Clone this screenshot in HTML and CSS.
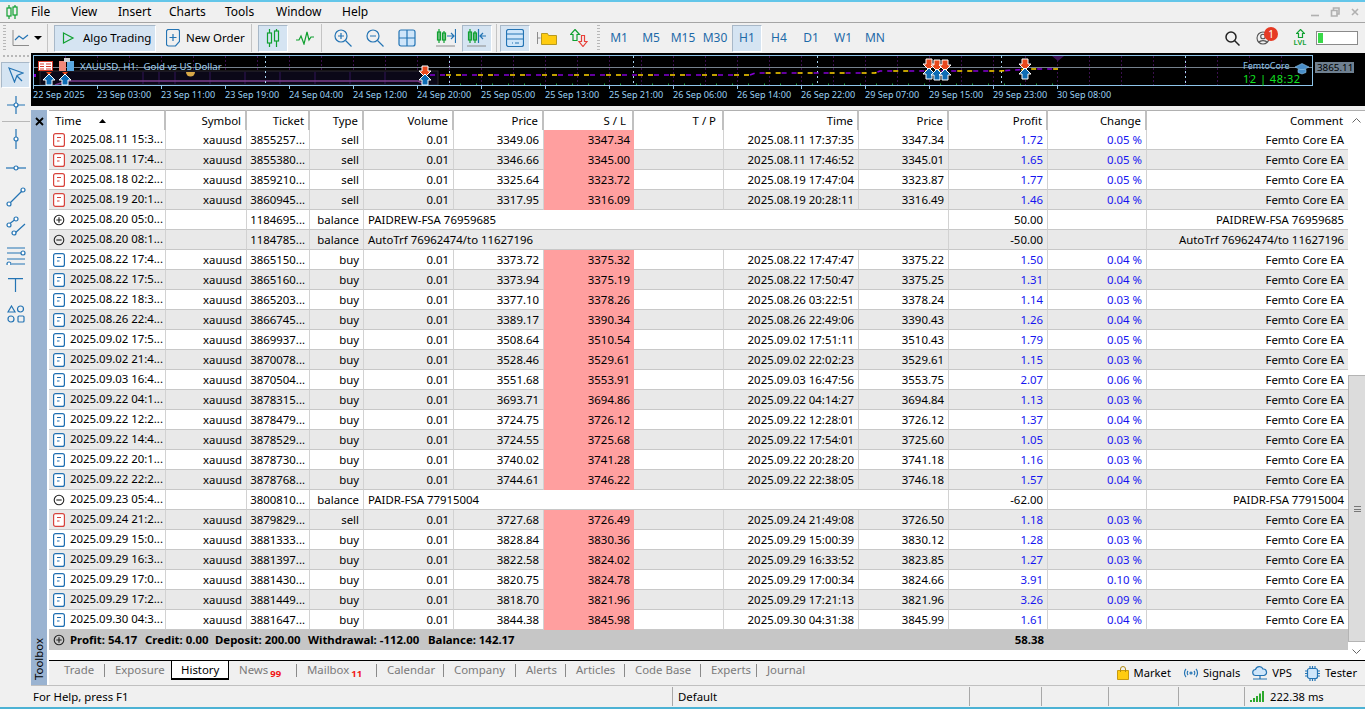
FILE: index.html
```html
<!DOCTYPE html>
<html lang="en">
<head>
<meta charset="utf-8">
<title>MetaTrader 5</title>
<link rel="stylesheet" href="styles.css">
</head>
<body>
<svg class="icon-defs" width="0" height="0">
  <defs>
    <symbol id="i-sell" viewBox="0 0 12 14"><rect x=".6" y=".6" width="10.800" height="12.800" rx="2" fill="#fff" stroke="#d8433c" stroke-width="1.2"/><path d="M4 4.500h4M4 8h2.500" fill="none" stroke="#d8433c" stroke-width="1.2"/></symbol>
    <symbol id="i-buy" viewBox="0 0 12 14"><rect x=".6" y=".6" width="10.800" height="12.800" rx="2" fill="#fff" stroke="#1f6fb2" stroke-width="1.2"/><path d="M4 4.500h4M4 8h2.500" fill="none" stroke="#1f6fb2" stroke-width="1.2"/></symbol>
    <symbol id="i-plus" viewBox="0 0 12 14"><circle cx="6" cy="7" r="4.800" fill="none" stroke="#222" stroke-width="1.1"/><path d="M3.300 7h5.400M6 4.300v5.400" fill="none" stroke="#222" stroke-width="1.1"/></symbol>
    <symbol id="i-minus" viewBox="0 0 12 14"><circle cx="6" cy="7" r="4.800" fill="none" stroke="#222" stroke-width="1.1"/><path d="M3.300 7h5.400" fill="none" stroke="#222" stroke-width="1.1"/></symbol>
  </defs>
</svg>
<div class="app">
  <div class="strip"></div>

  <nav class="menubar">
    <svg class="menu-logo" width="12" height="14" viewBox="0 0 12 14"><path class="g" d="M3 0v3M3 11v3M9 0v2M9 10v4"/><rect class="g" x="1" y="3" width="4" height="8"/><rect class="g" x="7" y="2" width="4" height="8"/></svg>
    <span class="menu-item mi-file">File</span>
    <span class="menu-item mi-view">View</span>
    <span class="menu-item mi-insert">Insert</span>
    <span class="menu-item mi-charts">Charts</span>
    <span class="menu-item mi-tools">Tools</span>
    <span class="menu-item mi-window">Window</span>
    <span class="menu-item mi-help">Help</span>
    <div class="win-controls">
      <svg width="10" height="10" viewBox="0 0 10 10"><path class="wc" d="M1 8.5h8"/></svg>
      <svg width="10" height="10" viewBox="0 0 10 10"><path class="wc" d="M1.5 3.5h5.5v5.500h-5.500zM3.500 3V1h5.500v6h-2"/></svg>
      <svg width="10" height="10" viewBox="0 0 10 10"><path class="wc" d="M2 2l6 6M8 2l-6 6"/></svg>
    </div>
  </nav>

  <div class="toolbar">
    <div class="grip"></div>
    <div class="chart-type">
      <svg width="18" height="18" viewBox="0 0 18 18"><path class="axis" d="M1 1v15.500h16"/><path class="bl" d="M3 11l4-4 4 3 5-4"/></svg>
      <svg class="caret" width="8" height="4" viewBox="0 0 8 4"><path d="M0 0h8L4 4z"/></svg>
    </div>
    <div class="tb-sep sep-a"></div>
    <div class="algo">
      <svg width="13" height="12" viewBox="0 0 13 12"><path class="g" d="M1.500 1l9.500 5-9.500 5z"/></svg>
      <span>Algo Trading</span>
    </div>
    <div class="order">
      <svg width="14" height="18" viewBox="0 0 14 18"><path class="bl" d="M2.500.5h9a2 2 0 0 1 2 2v10l-4 4.500h-7a2 2 0 0 1-2-2v-12.500a2 2 0 0 1 2-2z"/><path class="bl" d="M7 5v7M3.500 8.500h7"/></svg>
      <span>New Order</span>
    </div>
    <div class="tb-sep sep-b"></div>

    <div class="group">
      <div class="tool on"><svg width="14" height="18" viewBox="0 0 14 18"><path class="g" d="M3.500 0v4M3.500 14v4M10.500 0v2M10.500 12v6"/><rect class="g" x="1.500" y="4" width="4" height="10"/><rect class="g" x="8.500" y="2" width="4" height="10"/></svg></div>
      <div class="tool"><svg width="18" height="14" viewBox="0 0 18 14"><path class="g" d="M0 9h3l2-4 3 8 3-12 2 8 2-3h3"/></svg></div>
    </div>
    <div class="tb-sep sep-c"></div>

    <div class="group grp-zoom">
      <div class="tool"><svg width="18" height="18" viewBox="0 0 18 18"><circle class="bl" cx="7" cy="7" r="6"/><path class="bl" d="M11.500 11.500l6 6M4 7h6M7 4v6"/></svg></div>
      <div class="tool"><svg width="18" height="18" viewBox="0 0 18 18"><circle class="bl" cx="7" cy="7" r="6"/><path class="bl" d="M11.500 11.500l6 6M4 7h6"/></svg></div>
      <div class="tool"><svg width="18" height="18" viewBox="0 0 18 18"><rect class="bl lightfill" x="1" y="1" width="16" height="16" rx="2"/><path class="bl" d="M9 1v16M1 9h16"/></svg></div>
    </div>

    <div class="group grp-shift">
      <div class="tool"><svg width="20" height="18" viewBox="0 0 20 18"><path class="g" d="M3 0v14M8 2v12"/><rect class="g" x="1.500" y="3" width="3" height="8"/><rect class="g" x="6.500" y="4" width="3" height="7"/><path class="bl" d="M11 7h7M15 4l3 3-3 3M19.500 0v14"/><path class="axis" d="M0 17h19"/></svg></div>
      <div class="tool on"><svg width="20" height="18" viewBox="0 0 20 18"><path class="g" d="M3 0v14M8 2v12"/><rect class="g" x="1.500" y="3" width="3" height="8"/><rect class="g" x="6.500" y="4" width="3" height="7"/><path class="bl" d="M11.500 0v14M19 7h-6M16 4l-3 3 3 3"/><path class="axis" d="M0 17h19"/></svg></div>
    </div>
    <div class="tb-sep sep-d"></div>

    <div class="group grp-win">
      <div class="tool on"><svg width="18" height="18" viewBox="0 0 18 18"><rect class="bl lightfill" x=".5" y=".5" width="17" height="17" rx="2"/><path class="bl" d="M.5 5h17M.5 10h17M6 14h1M9 14h4"/></svg></div>
      <div class="tool"><svg width="20" height="14" viewBox="0 0 20 14"><path class="axis" d="M.5 1v12M.5 7h3"/><path class="folder" d="M4.500 2.500h6l1 2h8v9h-15z"/></svg></div>
      <div class="tool"><svg width="18" height="18" viewBox="0 0 18 18"><path class="g" d="M5 .5l4.500 5h-2.500v6h-4v-6h-2.500z"/><path class="red" d="M11.500 6.500h3v6h2.500l-4 5-4-5h2.500z"/></svg></div>
    </div>
    <div class="grip grip-b"></div>

    <div class="group grp-tf">
      <div class="tf">M1</div><div class="tf">M5</div><div class="tf">M15</div><div class="tf">M30</div>
      <div class="tf on">H1</div>
      <div class="tf">H4</div><div class="tf">D1</div><div class="tf">W1</div><div class="tf">MN</div>
    </div>

    <div class="tb-right">
      <svg width="15" height="15" viewBox="0 0 15 15"><circle class="blk" cx="6" cy="6" r="5"/><path class="blk" d="M9.500 9.500l5 5"/></svg>
      <div class="user">
        <svg width="14" height="14" viewBox="0 0 14 14"><circle class="usr" cx="7" cy="7" r="6"/><circle class="usr" cx="7" cy="5.500" r="2.300"/><path class="usr" d="M3 11.500c1-2.500 7-2.500 8 0"/></svg>
        <span class="badge">1</span>
      </div>
      <div class="lvl">
        <svg width="9" height="9" viewBox="0 0 9 9"><path class="g" d="M4.500.5l4 4h-2v4h-4v-4h-2z"/></svg>
        <span>LVL</span>
      </div>
      <div class="meter"><div class="meter-fill"></div></div>
    </div>
  </div>

  <div class="workspace">
    <aside class="sidetools">
      <div class="grip-h"></div>
      <div class="st on"><svg width="16" height="16" viewBox="0 0 16 16"><path class="bl" d="M1 1l14 5-6 2.500-2.500 6.500z"/><path class="bl" d="M9 9l5 5"/></svg></div>
      <div class="st"><svg width="18" height="18" viewBox="0 0 18 18"><path class="bl" d="M9 0v18M0 9h18"/><circle class="bl whitefill" cx="9" cy="9" r="2"/></svg></div>
      <div class="st-sep"></div>
      <div class="st"><svg width="6" height="20" viewBox="0 0 6 20"><path class="bl" d="M3 0v20"/><circle class="bl whitefill" cx="3" cy="10" r="2"/></svg></div>
      <div class="st"><svg width="20" height="6" viewBox="0 0 20 6"><path class="bl" d="M0 3h20"/><circle class="bl whitefill" cx="10" cy="3" r="2"/></svg></div>
      <div class="st"><svg width="20" height="20" viewBox="0 0 20 20"><path class="bl" d="M3 17L17 3"/><circle class="bl whitefill" cx="3" cy="17" r="2"/><circle class="bl whitefill" cx="17" cy="3" r="2"/></svg></div>
      <div class="st"><svg width="20" height="20" viewBox="0 0 20 20"><path class="bl" d="M2 9l9-7M8 18l11-10"/><circle class="bl whitefill" cx="3" cy="9" r="2"/><circle class="bl whitefill" cx="10" cy="3" r="2"/><circle class="bl whitefill" cx="8" cy="17" r="2"/></svg></div>
      <div class="st"><svg width="20" height="18" viewBox="0 0 20 18"><path class="bl" d="M1 1h18M1 6h14M1 12h18M6 17h13"/><circle class="bl whitefill" cx="17" cy="6" r="2"/><circle class="bl whitefill" cx="3" cy="17" r="2"/></svg></div>
      <div class="st"><svg width="15" height="14" viewBox="0 0 15 14"><path class="bl" d="M0 .6h15M7.500 .6v13.400"/></svg></div>
      <div class="st"><svg width="18" height="18" viewBox="0 0 18 18"><path class="bl" d="M4.500 1l3.500 6h-7z"/><circle class="bl" cx="13.500" cy="4" r="3"/><circle class="bl" cx="4" cy="14" r="3"/><rect class="bl" x="11" y="11" width="6" height="6" rx="1"/></svg></div>
    </aside>

    <main class="main">
      <div class="chart">
        <svg class="chart-svg" width="1334" height="53" viewBox="31 53 1334 53">
          <defs>
            <pattern id="vgrid" x="1" y="0" width="32" height="4" patternUnits="userSpaceOnUse"><rect width="1" height="2" fill="#3a0f4d"/></pattern>
            <symbol id="up" viewBox="-7 -7 14 14" width="14" height="14"><path d="M0-6L6 0H3V5H-3V0H-6Z" fill="#0e6cb4" stroke="#fff"/></symbol>
            <symbol id="dn" viewBox="-7 -7 14 14" width="14" height="14"><path d="M0 6L6 0H3V-5H-3V0H-6Z" fill="#e8481c" stroke="#fff"/></symbol>
          </defs>
          <rect x="33" y="56" width="1279" height="29" fill="url(#vgrid)"/>
          <rect class="band" x="40" y="71" width="398" height="14"/>
          <path class="band-bar" d="M143 72v12M159 72v12M175 72v12M210 72v12M245 72v12M280 72v12M315 72v12M350 72v12M385 72v12"/>
          <path class="band-line" d="M55 85L67 81H418L426 85"/>
          <path class="sun" d="M186 72h9a4.500 4.500 0 0 1-9 0z"/>
          <path class="vdash" d="M265.500 56v29M449.500 56v29M633.500 56v29M817.500 56v29M1001.500 56v29M1185.500 56v29"/>
          <path class="hline" d="M33 67.500h1279"/>
          <rect class="dot-p" x="33" y="74" width="3" height="3"/>
          <path class="top-p" d="M1052 56h12l-6 5z"/>
          <path class="series-y" d="M430 75H750L755 73H875L880 71H1000L1030 69H1058"/>
          <path class="series-p" d="M430 75H750L755 73H875L880 71H1000L1030 69H1058"/>
          <path class="ticks-g" d="M460 84.500H1060"/>
          <rect class="frame" x="33.500" y="55.500" width="1279" height="30"/>
          <path class="tick" d="M33.500 85v4M97.500 85v4M161.500 85v4M225.500 85v4M289.500 85v4M353.500 85v4M417.500 85v4M481.500 85v4M545.500 85v4M609.500 85v4M673.500 85v4M737.500 85v4M801.500 85v4M865.500 85v4M929.500 85v4M993.500 85v4M1057.500 85v4"/>
          <rect class="ic-red" x="38.500" y="61.500" width="14" height="9"/>
          <path class="ic-red-l" d="M40 64h4M40 66.500h4M40 69h4M46 64h5M46 66.500h5M46 69h5"/>
          <rect class="ic-save" x="59" y="61" width="7" height="10"/>
          <rect class="ic-save2" x="67" y="61" width="7" height="10"/>
          <rect class="ic-save3" x="64" y="58" width="6" height="4"/>
          <path class="tri-r" d="M46 72h6l-3 3zM62 72h6l-3 3z"/>
          <use href="#up" x="42" y="73"/><use href="#up" x="58" y="73"/>
          <use href="#dn" x="418" y="64"/><use href="#up" x="418" y="73"/>
          <use href="#dn" x="922" y="57"/><use href="#dn" x="930" y="58"/><use href="#dn" x="938" y="58"/>
          <use href="#up" x="922" y="67"/><use href="#up" x="930" y="68"/><use href="#up" x="938" y="68"/>
          <use href="#dn" x="1018" y="57"/><use href="#up" x="1018" y="67"/>
          <text class="c-title" x="80" y="70">XAUUSD, H1:  Gold vs US Dollar</text>
          <text class="c-date" x="33" y="98">22 Sep 2025</text>
          <text class="c-date" x="97" y="98">23 Sep 03:00</text>
          <text class="c-date" x="161" y="98">23 Sep 11:00</text>
          <text class="c-date" x="225" y="98">23 Sep 19:00</text>
          <text class="c-date" x="289" y="98">24 Sep 04:00</text>
          <text class="c-date" x="353" y="98">24 Sep 12:00</text>
          <text class="c-date" x="417" y="98">24 Sep 20:00</text>
          <text class="c-date" x="481" y="98">25 Sep 05:00</text>
          <text class="c-date" x="545" y="98">25 Sep 13:00</text>
          <text class="c-date" x="609" y="98">25 Sep 21:00</text>
          <text class="c-date" x="673" y="98">26 Sep 06:00</text>
          <text class="c-date" x="737" y="98">26 Sep 14:00</text>
          <text class="c-date" x="801" y="98">26 Sep 22:00</text>
          <text class="c-date" x="865" y="98">29 Sep 07:00</text>
          <text class="c-date" x="929" y="98">29 Sep 15:00</text>
          <text class="c-date" x="993" y="98">29 Sep 23:00</text>
          <text class="c-date" x="1057" y="98">30 Sep 08:00</text>
          <text class="c-femto" x="1243" y="68.500">FemtoCore</text>
          <path class="cap" d="M1295 67l7-3.500 7 3.500-7 3.500z"/><path class="cap" d="M1298 69.500v3l4 1.500 4-1.500v-3z"/>
          <text class="c-clock" x="1243" y="82.500">12 | 48:32</text>
          <rect class="price-tag" x="1315" y="62" width="39" height="11"/>
          <text class="c-price" x="1317" y="71">3865.11</text>
        </svg>
      </div>

      <section class="toolbox">
        <div class="tb-strip">
          <svg width="9" height="9" viewBox="0 0 9 9"><path class="x" d="M1 1l7 7M8 1l-7 7"/></svg>
          <span class="tb-label">Toolbox</span>
        </div>
        <div class="tb-body">
          <div class="grid-area">
            <div class="grid-wrap">
              <table class="grid">
                <colgroup>
                  <col class="c1"><col class="c2"><col class="c3"><col class="c4"><col class="c5"><col class="c6"><col class="c7"><col class="c8"><col class="c9"><col class="c10"><col class="c11"><col class="c12"><col class="c13">
                </colgroup>
                <thead>
                  <tr><th class="l first"><span class="th-time">Time<svg class="sort" width="7" height="4" viewBox="0 0 7 4"><path d="M3.500 0L7 4H0z"/></svg></span></th><th>Symbol</th><th>Ticket</th><th>Type</th><th>Volume</th><th>Price</th><th class="wide">S / L</th><th class="wide">T / P</th><th>Time</th><th>Price</th><th>Profit</th><th>Change</th><th>Comment</th></tr>
                </thead>
                <tbody>
                  <tr><td class="t"><svg class="ri"><use href="#i-sell"/></svg>2025.08.11 15:3...</td><td>xauusd</td><td>3855257...</td><td>sell</td><td>0.01</td><td>3349.06</td><td class="sl">3347.34</td><td></td><td>2025.08.11 17:37:35</td><td>3347.34</td><td class="bu">1.72</td><td class="bu">0.05 %</td><td>Femto Core EA</td></tr>
                  <tr><td class="t"><svg class="ri"><use href="#i-sell"/></svg>2025.08.11 17:4...</td><td>xauusd</td><td>3855380...</td><td>sell</td><td>0.01</td><td>3346.66</td><td class="sl">3345.00</td><td></td><td>2025.08.11 17:46:52</td><td>3345.01</td><td class="bu">1.65</td><td class="bu">0.05 %</td><td>Femto Core EA</td></tr>
                  <tr><td class="t"><svg class="ri"><use href="#i-sell"/></svg>2025.08.18 02:2...</td><td>xauusd</td><td>3859210...</td><td>sell</td><td>0.01</td><td>3325.64</td><td class="sl">3323.72</td><td></td><td>2025.08.19 17:47:04</td><td>3323.87</td><td class="bu">1.77</td><td class="bu">0.05 %</td><td>Femto Core EA</td></tr>
                  <tr><td class="t"><svg class="ri"><use href="#i-sell"/></svg>2025.08.19 20:1...</td><td>xauusd</td><td>3860945...</td><td>sell</td><td>0.01</td><td>3317.95</td><td class="sl">3316.09</td><td></td><td>2025.08.19 20:28:11</td><td>3316.49</td><td class="bu">1.46</td><td class="bu">0.04 %</td><td>Femto Core EA</td></tr>
                  <tr><td class="t"><svg class="ri"><use href="#i-plus"/></svg>2025.08.20 05:0...</td><td></td><td>1184695...</td><td>balance</td><td class="l" colspan="6">PAIDREW-FSA 76959685</td><td>50.00</td><td></td><td>PAIDREW-FSA 76959685</td></tr>
                  <tr><td class="t"><svg class="ri"><use href="#i-minus"/></svg>2025.08.20 08:1...</td><td></td><td>1184785...</td><td>balance</td><td class="l" colspan="6">AutoTrf 76962474/to 11627196</td><td>-50.00</td><td></td><td>AutoTrf 76962474/to 11627196</td></tr>
                  <tr><td class="t"><svg class="ri"><use href="#i-buy"/></svg>2025.08.22 17:4...</td><td>xauusd</td><td>3865150...</td><td>buy</td><td>0.01</td><td>3373.72</td><td class="sl">3375.32</td><td></td><td>2025.08.22 17:47:47</td><td>3375.22</td><td class="bu">1.50</td><td class="bu">0.04 %</td><td>Femto Core EA</td></tr>
                  <tr><td class="t"><svg class="ri"><use href="#i-buy"/></svg>2025.08.22 17:5...</td><td>xauusd</td><td>3865160...</td><td>buy</td><td>0.01</td><td>3373.94</td><td class="sl">3375.19</td><td></td><td>2025.08.22 17:50:47</td><td>3375.25</td><td class="bu">1.31</td><td class="bu">0.04 %</td><td>Femto Core EA</td></tr>
                  <tr><td class="t"><svg class="ri"><use href="#i-buy"/></svg>2025.08.22 18:3...</td><td>xauusd</td><td>3865203...</td><td>buy</td><td>0.01</td><td>3377.10</td><td class="sl">3378.26</td><td></td><td>2025.08.26 03:22:51</td><td>3378.24</td><td class="bu">1.14</td><td class="bu">0.03 %</td><td>Femto Core EA</td></tr>
                  <tr><td class="t"><svg class="ri"><use href="#i-buy"/></svg>2025.08.26 22:4...</td><td>xauusd</td><td>3866745...</td><td>buy</td><td>0.01</td><td>3389.17</td><td class="sl">3390.34</td><td></td><td>2025.08.26 22:49:06</td><td>3390.43</td><td class="bu">1.26</td><td class="bu">0.04 %</td><td>Femto Core EA</td></tr>
                  <tr><td class="t"><svg class="ri"><use href="#i-buy"/></svg>2025.09.02 17:5...</td><td>xauusd</td><td>3869937...</td><td>buy</td><td>0.01</td><td>3508.64</td><td class="sl">3510.54</td><td></td><td>2025.09.02 17:51:11</td><td>3510.43</td><td class="bu">1.79</td><td class="bu">0.05 %</td><td>Femto Core EA</td></tr>
                  <tr><td class="t"><svg class="ri"><use href="#i-buy"/></svg>2025.09.02 21:4...</td><td>xauusd</td><td>3870078...</td><td>buy</td><td>0.01</td><td>3528.46</td><td class="sl">3529.61</td><td></td><td>2025.09.02 22:02:23</td><td>3529.61</td><td class="bu">1.15</td><td class="bu">0.03 %</td><td>Femto Core EA</td></tr>
                  <tr><td class="t"><svg class="ri"><use href="#i-buy"/></svg>2025.09.03 16:4...</td><td>xauusd</td><td>3870504...</td><td>buy</td><td>0.01</td><td>3551.68</td><td class="sl">3553.91</td><td></td><td>2025.09.03 16:47:56</td><td>3553.75</td><td class="bu">2.07</td><td class="bu">0.06 %</td><td>Femto Core EA</td></tr>
                  <tr><td class="t"><svg class="ri"><use href="#i-buy"/></svg>2025.09.22 04:1...</td><td>xauusd</td><td>3878315...</td><td>buy</td><td>0.01</td><td>3693.71</td><td class="sl">3694.86</td><td></td><td>2025.09.22 04:14:27</td><td>3694.84</td><td class="bu">1.13</td><td class="bu">0.03 %</td><td>Femto Core EA</td></tr>
                  <tr><td class="t"><svg class="ri"><use href="#i-buy"/></svg>2025.09.22 12:2...</td><td>xauusd</td><td>3878479...</td><td>buy</td><td>0.01</td><td>3724.75</td><td class="sl">3726.12</td><td></td><td>2025.09.22 12:28:01</td><td>3726.12</td><td class="bu">1.37</td><td class="bu">0.04 %</td><td>Femto Core EA</td></tr>
                  <tr><td class="t"><svg class="ri"><use href="#i-buy"/></svg>2025.09.22 14:4...</td><td>xauusd</td><td>3878529...</td><td>buy</td><td>0.01</td><td>3724.55</td><td class="sl">3725.68</td><td></td><td>2025.09.22 17:54:01</td><td>3725.60</td><td class="bu">1.05</td><td class="bu">0.03 %</td><td>Femto Core EA</td></tr>
                  <tr><td class="t"><svg class="ri"><use href="#i-buy"/></svg>2025.09.22 20:1...</td><td>xauusd</td><td>3878730...</td><td>buy</td><td>0.01</td><td>3740.02</td><td class="sl">3741.28</td><td></td><td>2025.09.22 20:28:20</td><td>3741.18</td><td class="bu">1.16</td><td class="bu">0.03 %</td><td>Femto Core EA</td></tr>
                  <tr><td class="t"><svg class="ri"><use href="#i-buy"/></svg>2025.09.22 22:2...</td><td>xauusd</td><td>3878768...</td><td>buy</td><td>0.01</td><td>3744.61</td><td class="sl">3746.22</td><td></td><td>2025.09.22 22:38:05</td><td>3746.18</td><td class="bu">1.57</td><td class="bu">0.04 %</td><td>Femto Core EA</td></tr>
                  <tr><td class="t"><svg class="ri"><use href="#i-minus"/></svg>2025.09.23 05:4...</td><td></td><td>3800810...</td><td>balance</td><td class="l" colspan="6">PAIDR-FSA 77915004</td><td>-62.00</td><td></td><td>PAIDR-FSA 77915004</td></tr>
                  <tr><td class="t"><svg class="ri"><use href="#i-sell"/></svg>2025.09.24 21:2...</td><td>xauusd</td><td>3879829...</td><td>sell</td><td>0.01</td><td>3727.68</td><td class="sl">3726.49</td><td></td><td>2025.09.24 21:49:08</td><td>3726.50</td><td class="bu">1.18</td><td class="bu">0.03 %</td><td>Femto Core EA</td></tr>
                  <tr><td class="t"><svg class="ri"><use href="#i-buy"/></svg>2025.09.29 15:0...</td><td>xauusd</td><td>3881333...</td><td>buy</td><td>0.01</td><td>3828.84</td><td class="sl">3830.36</td><td></td><td>2025.09.29 15:00:39</td><td>3830.12</td><td class="bu">1.28</td><td class="bu">0.03 %</td><td>Femto Core EA</td></tr>
                  <tr><td class="t"><svg class="ri"><use href="#i-buy"/></svg>2025.09.29 16:3...</td><td>xauusd</td><td>3881397...</td><td>buy</td><td>0.01</td><td>3822.58</td><td class="sl">3824.02</td><td></td><td>2025.09.29 16:33:52</td><td>3823.85</td><td class="bu">1.27</td><td class="bu">0.03 %</td><td>Femto Core EA</td></tr>
                  <tr><td class="t"><svg class="ri"><use href="#i-buy"/></svg>2025.09.29 17:0...</td><td>xauusd</td><td>3881430...</td><td>buy</td><td>0.01</td><td>3820.75</td><td class="sl">3824.78</td><td></td><td>2025.09.29 17:00:34</td><td>3824.66</td><td class="bu">3.91</td><td class="bu">0.10 %</td><td>Femto Core EA</td></tr>
                  <tr><td class="t"><svg class="ri"><use href="#i-buy"/></svg>2025.09.29 17:2...</td><td>xauusd</td><td>3881449...</td><td>buy</td><td>0.01</td><td>3818.70</td><td class="sl">3821.96</td><td></td><td>2025.09.29 17:21:13</td><td>3821.96</td><td class="bu">3.26</td><td class="bu">0.09 %</td><td>Femto Core EA</td></tr>
                  <tr><td class="t"><svg class="ri"><use href="#i-buy"/></svg>2025.09.30 04:3...</td><td>xauusd</td><td>3881647...</td><td>buy</td><td>0.01</td><td>3844.38</td><td class="sl">3845.98</td><td></td><td>2025.09.30 04:31:38</td><td>3845.99</td><td class="bu">1.61</td><td class="bu">0.04 %</td><td>Femto Core EA</td></tr>
                </tbody>
                <tfoot>
                  <tr><td class="t l" colspan="10"><svg class="ri"><use href="#i-plus"/></svg><span class="totals"><span>Profit: 54.17</span><span>Credit: 0.00</span><span>Deposit: 200.00</span><span>Withdrawal: -112.00</span><span>Balance: 142.17</span></span></td><td>58.38</td><td colspan="2"></td></tr>
                </tfoot>
              </table>
            </div>
            <div class="scrollbar">
              <div class="sb-btn"><svg width="9" height="5" viewBox="0 0 9 5"><path class="chev" d="M.5 4.500l4-4 4 4"/></svg></div>
              <div class="sb-track"><div class="sb-thumb"><span class="sb-grip"></span></div></div>
              <div class="sb-btn"><svg width="9" height="5" viewBox="0 0 9 5"><path class="chev" d="M.5.500l4 4 4-4"/></svg></div>
            </div>
          </div>

          <div class="tabbar">
            <div class="tabs">
              <span class="tab sep">Trade</span>
              <span class="tab">Exposure</span>
              <span class="tab active">History</span>
              <span class="tab sep">News<sub class="count">99</sub></span>
              <span class="tab sep">Mailbox<sub class="count">11</sub></span>
              <span class="tab sep">Calendar</span>
              <span class="tab sep">Company</span>
              <span class="tab sep">Alerts</span>
              <span class="tab sep">Articles</span>
              <span class="tab sep">Code Base</span>
              <span class="tab sep">Experts</span>
              <span class="tab">Journal</span>
            </div>
            <div class="services">
              <span class="svc svc-market"><svg width="12" height="14" viewBox="0 0 12 14"><path class="bag" d="M.5 4.500h11v9h-11z"/><path class="bag-h" d="M3.500 6V3a2.500 2.500 0 0 1 5 0v3"/></svg>Market</span>
              <span class="svc svc-signals"><svg width="16" height="10" viewBox="0 0 16 10"><path class="bl" d="M3 1c-2 2-2 6 0 8M13 1c2 2 2 6 0 8M5 3c-1 1-1 3 0 4M11 3c1 1 1 3 0 4"/><circle class="bl" cx="8" cy="5" r="1"/></svg>Signals</span>
              <span class="svc svc-vps"><svg width="16" height="16" viewBox="0 0 16 16"><path class="bl lightfill" d="M4 10.500a3 3 0 0 1-.500-6c1-3.500 6-4 7.500-.500a3.300 3.300 0 0 1 1 6.500z"/><path class="bl" d="M8 10.500v3M1 14h14"/></svg>VPS</span>
              <span class="svc svc-tester"><svg width="15" height="15" viewBox="0 0 15 15"><rect class="bl lightfill" x="2.500" y="2.500" width="10" height="10" rx="2"/><path class="bl" d="M5 0v2M7.500 0v2M10 0v2M5 13v2M7.500 13v2M10 13v2M0 5h2M0 7.500h2M0 10h2M13 5h2M13 7.500h2M13 10h2"/></svg>Tester</span>
            </div>
          </div>
        </div>
      </section>
    </main>
  </div>

  <footer class="status">
    <span class="st-help">For Help, press F1</span>
    <span class="st-default">Default</span>
    <span class="st-cell st-c1"></span>
    <span class="st-cell st-c2"></span>
    <span class="st-cell st-c3"></span>
    <span class="st-cell st-c4"></span>
    <span class="st-ping">
      <svg width="14" height="11" viewBox="0 0 14 11"><path class="ping" d="M1 11V9M4 11V7M7 11V5M10 11V2.500M13 11V0"/></svg>
      222.38 ms
    </span>
  </footer>
  <div class="strip strip-bottom"></div>
</div>
</body>
</html>
```

FILE: styles.css
```css
* { box-sizing: border-box; }
html, body { margin: 0; padding: 0; }
body {
  width: 1365px;
  height: 709px;
  overflow: hidden;
  background: #f0f0f0;
  color: #000;
  font-family: "Noto Sans", "Open Sans", sans-serif;
  font-size: 11.4px;
  line-height: 1;
}
svg { display: block; flex: none; fill: none; }
.icon-defs { display: none; }
.app { display: flex; flex-direction: column; width: 1365px; height: 709px; }
.strip { height: 2px; background: #63c6e9; flex: none; }
.strip-bottom { background: #4cb2d4; }

/* shared icon strokes */
.g { stroke: #10a030; stroke-width: 1.2; fill: none; }
.bl { stroke: #2474b4; stroke-width: 1.2; fill: none; }
.bl.lightfill { fill: #cfe6fa; }
.bl.whitefill { fill: #fff; }
.red { stroke: #e8423a; stroke-width: 1.2; fill: none; }
.axis { stroke: #8c8c8c; stroke-width: 1; fill: none; }
.blk { stroke: #222; stroke-width: 1.5; fill: none; }
.usr { stroke: #555; stroke-width: 1.1; fill: none; }
.folder { fill: #ffcc10; stroke: #b89a20; stroke-width: 1; }
.wc { stroke: #b0b0b0; stroke-width: 1.6; fill: none; }
.x { stroke: #000; stroke-width: 1.8; fill: none; }
.chev { stroke: #666; stroke-width: 1; fill: none; }
.bag { fill: #ffcc10; stroke: #c89a10; stroke-width: 1; }
.bag-h { stroke: #b08a10; stroke-width: 1; fill: none; }
.ping { stroke: #18a018; stroke-width: 1.8; fill: none; }
.caret { fill: #000; }

/* menu */
.menubar {
  height: 21px;
  flex: none;
  font-size: 12px;
  border-bottom: 1px solid #a5a5a5;
  display: grid;
  grid-template-columns: 31px 40px 47px 51px 56px 51px 66px 1fr auto;
  align-items: center;
}
.menu-logo { margin-left: 6px; }
.win-controls { display: flex; gap: 10px; padding-right: 5px; align-items: center; }

/* toolbar */
.toolbar { height: 30px; flex: none; display: flex; align-items: center; font-size: 11.5px; white-space: nowrap; }
.grip {
  width: 3px; height: 26px; margin-left: 3px; margin-right: 2px;
  background: repeating-linear-gradient(to bottom, #b8b8b8 0 1px, transparent 1px 3px);
}
.chart-type { width: 36px; height: 26px; display: flex; align-items: center; padding-left: 4px; gap: 4px; }
.tb-sep { width: 1px; height: 28px; background: #c4c4c4; flex: none; }
.sep-a { margin: 0 6px 0 3px; }
.sep-b { margin: 0 6px 0 4px; }
.sep-c { margin: 0 6px 0 1px; }
.sep-d { margin: 0 3px 0 4px; }
.algo {
  width: 102px; height: 27px; flex: none;
  display: flex; align-items: center; gap: 8px; padding-left: 7px;
  background: #d5e4f2;
  border: 1px solid; border-color: #a8b8c8 #fff #fff #a8b8c8;
}
.order { width: 91px; flex: none; display: flex; align-items: center; gap: 6px; padding-left: 10px; }
.group { display: flex; align-items: center; gap: 2px; flex: none; }
.grp-shift { margin-left: 9px; gap: 1px; }
.tool, .tf { width: 30px; height: 27px; display: flex; align-items: center; justify-content: center; flex: none; }
.tool.on, .tf.on {
  background: #d5e4f2;
  border: 1px solid; border-color: #a8b8c8 #fff #fff #a8b8c8;
}
.grip-b { margin-left: 3px; margin-right: 1px; }
.grp-tf { margin-left: 3px; }
.tf { color: #1d6aa8; font-size: 12px; }
.tb-right { margin-left: auto; display: flex; align-items: center; padding-right: 7px; }
.user { position: relative; margin-left: 16px; }
.badge {
  position: absolute; left: 8px; top: -4px;
  width: 14px; height: 14px; border-radius: 50%;
  background: #e63a24; color: #fff;
  font-size: 10px; line-height: 14px; text-align: center;
}
.lvl {
  margin-left: 23px; width: 14px;
  display: flex; flex-direction: column; align-items: center;
  color: #10a030; font-size: 7.5px; font-weight: 600; gap: 1px;
}
.meter { margin-left: 9px; width: 42px; height: 14px; border: 1px solid #8a8a8a; background: #fff; padding: 1px; }
.meter-fill { width: 5px; height: 100%; background: #38d848; }

/* layout */
.workspace { display: flex; height: 633px; flex: none; }
.sidetools { width: 31px; flex: none; display: flex; flex-direction: column; align-items: center; }
.grip-h {
  width: 26px; height: 2px; margin-top: 2px;
  background: repeating-linear-gradient(to right, #b8b8b8 0 2px, transparent 2px 4px);
}
.st { width: 29px; height: 29.2px; display: flex; align-items: center; justify-content: center; flex: none; }
.st.on {
  height: 26px; margin: 5px 0 2px; background: #d5e4f2;
  border: 1px solid; border-color: #a8b8c8 #fff #fff #a8b8c8;
}
.st-sep { width: 28px; height: 1px; background: #b8b8b8; margin: 2px 0; flex: none; }
.main { flex: 1; display: flex; flex-direction: column; min-width: 0; border-bottom: 1px solid #c0c0c0; }

/* chart */
.chart { height: 53px; background: #000; flex: none; }
.chart-svg { display: block; }
.frame { fill: none; stroke: #8ec5ea; stroke-width: 1; }
.tick { stroke: #8ec5ea; stroke-width: 1; }
.band { fill: #0b0818; stroke: #2e2a30; stroke-width: 1; }
.band-line { stroke: #7d3f8d; stroke-width: 1.5; fill: none; }
.band-bar { stroke: #1e0e38; stroke-width: 2; fill: none; }
.sun { fill: #d8a848; }
.vdash { stroke: #a8d4f0; stroke-width: 1; stroke-dasharray: 2 3; fill: none; }
.hline { stroke: #76828e; stroke-width: 1; fill: none; }
.dot-p { fill: #8400d4; }
.top-p { fill: #3a0f55; }
.tri-r { fill: #e8481c; }
.series-y { stroke: #ffd400; stroke-width: 1.6; stroke-dasharray: 5 5 5 17; stroke-dashoffset: 16; fill: none; }
.series-p { stroke: #8400d4; stroke-width: 1.6; stroke-dasharray: 5 5 5 17; fill: none; }
.ticks-g { stroke: #1f9a3a; stroke-width: 2; stroke-dasharray: 1 15; fill: none; }
.ic-red { fill: #fff; stroke: #d83c2c; stroke-width: 1; }
.ic-red-l { stroke: #d83c2c; stroke-width: 1; fill: none; }
.ic-save { fill: #f08878; }
.ic-save2 { fill: #5aa8e0; }
.ic-save3 { fill: #d0d0d0; }
.cap { fill: #4a8ec8; stroke: #8ec5ea; stroke-width: .6; }
.c-title { fill: #9fcdec; font-size: 9.7px; white-space: pre; }
.c-date { fill: #9ad0f4; font-size: 9.1px; }
.c-femto { fill: #8ec5ea; font-size: 9px; }
.c-clock { fill: #10e020; font-size: 11px; letter-spacing: .5px; }
.price-tag { fill: #6f8090; }
.c-price { fill: #000; font-size: 9.8px; }

/* toolbox */
.toolbox { flex: 1; display: flex; margin-top: 4px; min-height: 0; }
.tb-strip {
  width: 16px; flex: none; background: #9ab3d1;
  display: flex; flex-direction: column; justify-content: space-between; align-items: center;
  padding: 7px 0 5px;
}
.tb-label {
  writing-mode: vertical-rl; transform: rotate(180deg);
  font-size: 11.4px;
}
.tb-body { flex: 1; display: flex; flex-direction: column; min-width: 0; background: #fff; }
.grid-area { display: flex; flex: 1; min-height: 0; padding-left: 2px; }
.grid-wrap { width: 1299px; flex: none; }
.grid { border-collapse: separate; border-spacing: 0; table-layout: fixed; width: 1299px; }
.c1 { width: 117px; } .c2 { width: 81px; } .c3 { width: 63px; } .c4 { width: 54px; }
.c5, .c6, .c7, .c8, .c10 { width: 90px; } .c9 { width: 135px; }
.c11, .c12 { width: 99px; } .c13 { width: 201px; }
.grid th, .grid td {
  height: 20px; padding: 0 4px 0 3px; text-align: right;
  white-space: nowrap; overflow: hidden;
  font-weight: 400;
}
.grid th {
  border-top: 1px solid #b0b0b0;
  border-right: 2px solid #c0c0c0;
  background: #fff;
}
.grid th.wide { padding-right: 6px; }
.grid th:last-child { border-right: 0; padding-right: 5px; }
.grid th.first { padding-left: 6px; text-align: left; }
.th-time { display: flex; align-items: center; gap: 18px; }
.sort { fill: #000; }
.grid td {
  border-right: 1px solid #d2d2d2;
  border-bottom: 1px solid #c8c8c8;
}
.grid td:last-child { border-right: 0; padding-right: 4px; }
.grid tbody tr:nth-child(even) td { background-color: #e9e9e9; }
.grid td.l { text-align: left; }
.grid tbody td.l { padding-left: 4px; }
.grid tbody td.sl, .grid tbody tr:nth-child(even) td.sl { background-color: #ff9f9f; border-right: 0; border-bottom-color: #ff9f9f; }
.grid td.bu { color: #1414f0; }
.grid td.t { padding-left: 4px; text-align: left; }

/* row type icon */
.ri {
  display: inline-block;
  width: 12px; height: 14px; margin-right: 5px;
  vertical-align: middle;
}

.grid tfoot td { background-color: #c6c6c6; font-weight: 700; border: 0; }
.totals { display: inline-flex; vertical-align: middle; }
.totals span:nth-child(1) { width: 75px; }
.totals span:nth-child(2) { width: 70px; }
.totals span:nth-child(3) { width: 93px; }
.totals span:nth-child(4) { width: 120px; }

/* scrollbar */
.scrollbar { width: 17px; flex: none; display: flex; flex-direction: column; border-top: 1px solid #b0b0b0; }
.sb-btn { height: 19px; display: flex; align-items: center; justify-content: center; flex: none; background: #fff; }
.sb-track { flex: 1; display: flex; flex-direction: column; padding-top: 245px; background: #fff; }
.sb-thumb {
  height: 267px; background: #dcdcdc;
  border: 1px solid #b4b4b4; border-right: 0;
  display: flex; align-items: center; justify-content: center;
}
.sb-grip {
  width: 7px; height: 6px;
  background: repeating-linear-gradient(to bottom, #777 0 1px, transparent 1px 2.5px);
}

/* tabs */
.tabbar {
  height: 25px; flex: none; margin-left: 2px;
  border-top: 1px solid #000;
  background: #f0f0f0;
  display: flex; justify-content: space-between;
  font-size: 11.4px;
}
.tabs {
  display: grid;
  grid-template-columns: 51px 66px 58px 68px 80px 67px 72px 50px 59px 76px 56px 50px;
  margin-left: 5px; height: 19px; align-items: center;
}
.tab { color: #7a7a7a; padding-left: 10px; height: 13px; line-height: 12px; white-space: nowrap; }
.tab.sep { border-right: 1px solid #8a8a8a; }
.tab.active {
  color: #000; background: #fff; height: 19px; line-height: 17px;
  border: 1px solid #000; border-top: 0; border-bottom-width: 2px; padding-left: 9px;
}
.count { color: #f01818; font-size: 9.5px; font-weight: 700; margin-left: 2px; vertical-align: -3px; line-height: 1; }
.services { display: flex; align-items: center; height: 24px; padding-right: 8px; font-size: 11.2px; }
.svc { display: flex; align-items: center; gap: 4px; }
.svc-market { gap: 5px; }
.svc-signals, .svc-vps { margin-left: 12px; }
.svc-tester { margin-left: 13px; gap: 5px; }

/* status */
.status { height: 21px; flex: none; display: flex; align-items: center; padding-left: 33px; font-size: 11.4px; }
.st-help { width: 639px; }
.st-default { width: 297px; height: 19px; line-height: 19px; border-left: 1px solid #a8a8a8; padding-left: 5px; }
.st-cell { height: 19px; border-left: 1px solid #a8a8a8; flex: none; }
.st-c1 { width: 72px; } .st-c2 { width: 67px; } .st-c3 { width: 70px; } .st-c4 { width: 66px; }
.st-ping { height: 19px; border-left: 1px solid #a8a8a8; padding-left: 5px; display: flex; align-items: center; gap: 6px; font-size: 11.2px; }
```
